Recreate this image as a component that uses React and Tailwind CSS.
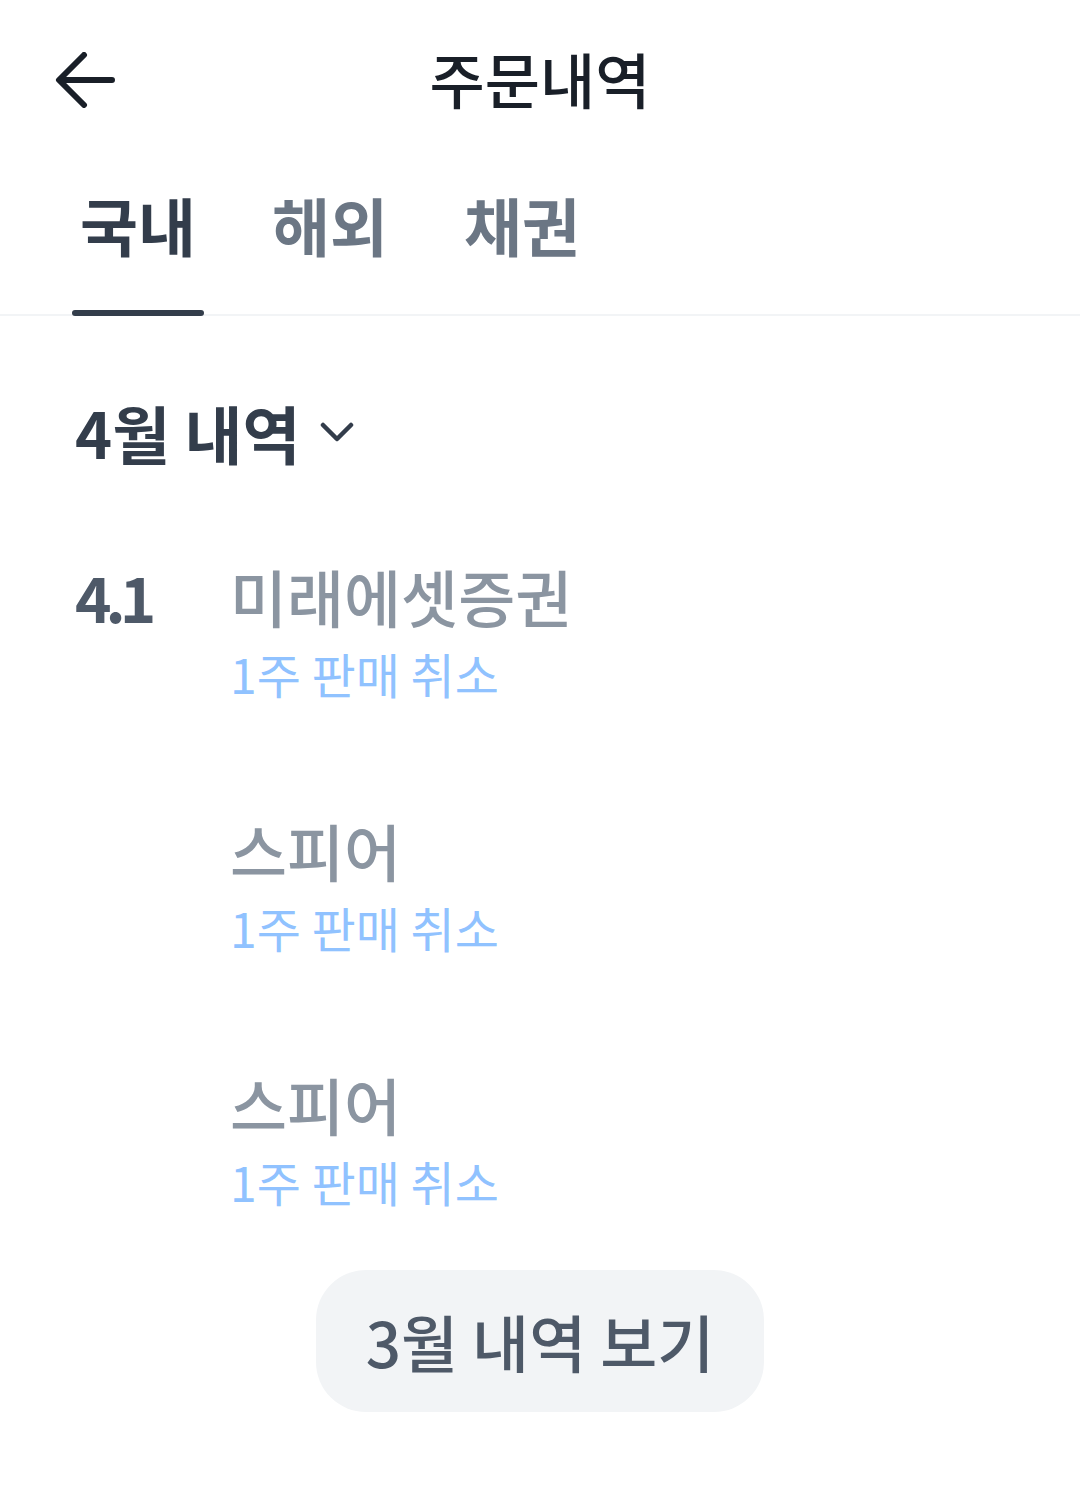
const rows = [
  { date: "4.1", name: "미래에셋증권", desc: "1주 판매 취소" },
  { date: "", name: "스피어", desc: "1주 판매 취소" },
  { date: "", name: "스피어", desc: "1주 판매 취소" },
];

const tabs = ["국내", "해외", "채권"];

const BackArrow = () => (
  <svg width="60" height="56" viewBox="0 0 60 56" fill="none">
    <path
      d="M29 3L4 28L29 53M5 28H57"
      stroke="#191f28"
      strokeWidth="6"
      strokeLinecap="round"
      strokeLinejoin="round"
    />
  </svg>
);

const Chevron = () => (
  <svg width="34" height="22" viewBox="0 0 34 22" fill="none">
    <path d="M3 4L17 18L31 4" stroke="#333d4b" strokeWidth="4.5" strokeLinecap="round" strokeLinejoin="round" />
  </svg>
);

const OrderRow = ({ row }) => {
  return (
    <div className="flex">
      <div className="w-[155px] text-[62px] leading-[80px] font-semibold text-[#4e5968] tracking-[-6px]">{row.date}</div>
      <div className="flex flex-col gap-[5px]">
        <p className="text-[62px] leading-[80px] font-medium text-[#8b95a1]">{row.name}</p>
        <p className="text-[48px] leading-[64px] text-[#90c2ff]">{row.desc}</p>
      </div>
    </div>
  );
};

export default function App() {
  const active = 0;
  return (
    <div
      className="w-[1080px] h-[1494px] bg-white overflow-hidden"
      style={{ fontFamily: '"Noto Sans CJK KR", "Noto Sans", sans-serif' }}
    >
      <header className="h-[160px] grid grid-cols-[1fr_auto_1fr] items-center px-[55px]">
        <div className="flex items-center">
          <BackArrow />
        </div>
        <h1 className="text-[60px] font-medium text-[#191f28] leading-[80px] mb-[5px]">주문내역</h1>
        <div />
      </header>

      <nav className="flex gap-[60px] px-[72px] border-b-2 border-[#f2f4f6] h-[156px]">
        {tabs.map((t, i) => (
          <div key={t} className="relative w-[132px] flex justify-center pt-[24px]">
            <span
              className={`text-[63px] leading-[80px] font-semibold whitespace-nowrap ${i === active ? "text-[#333d4b]" : "text-[#6b7684]"}`}
            >
              {t}
            </span>
            {i === active && (
              <div className="absolute left-0 right-0 -bottom-[2px] h-[6px] rounded-full bg-[#333d4b]" />
            )}
          </div>
        ))}
      </nav>

      <div className="px-[75px] pt-[76px]">
        <div className="flex items-center gap-[20px]">
          <h2 className="text-[63px] leading-[80px] font-bold text-[#333d4b]">4월 내역</h2>
          <Chevron />
        </div>

        <div className="mt-[84px] flex flex-col gap-[105px]">
          {rows.map((r, i) => (
            <OrderRow key={i} row={r} />
          ))}
        </div>
      </div>

      <div className="flex justify-center mt-[57px]">
        <button className="w-[448px] h-[142px] rounded-[50px] bg-[#f2f4f6] text-[62px] font-medium text-[#4e5968]">
          3월 내역 보기
        </button>
      </div>
    </div>
  );
}
